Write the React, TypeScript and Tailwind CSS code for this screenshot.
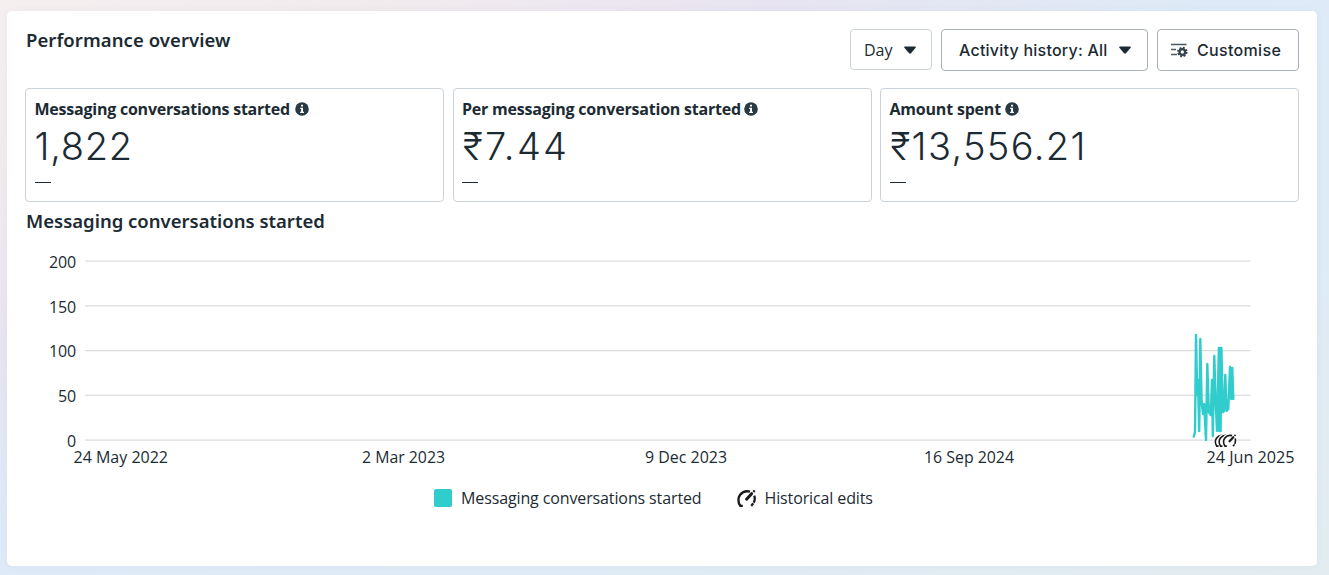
import { useId } from "react";

const metrics = [
  { label: "Messaging conversations started", value: "1,822", labelClass: "w-[257px] tracking-[-0.23px]", valueClass: "tracking-[0.7px]" },
  { label: "Per messaging conversation started", value: "₹7.44", labelClass: "w-[279px] tracking-[-0.21px]", valueClass: "pl-px tracking-[2.3px]" },
  { label: "Amount spent", value: "₹13,556.21", labelClass: "w-[112px] tracking-[-0.2px]", valueClass: "pl-px tracking-[1.35px]" },
];

const yTicks = [
  { label: "200", y: 261 },
  { label: "150", y: 305.75 },
  { label: "100", y: 350.5 },
  { label: "50", y: 395.25 },
  { label: "0", y: 440 },
];

const xTicks = [
  { label: "24 May 2022", x: 73.5, width: 94.5 },
  { label: "2 Mar 2023", x: 362, width: 83 },
  { label: "9 Dec 2023", x: 645, width: 82 },
  { label: "16 Sep 2024", x: 924, width: 90 },
  { label: "24 Jun 2025", x: 1206.5, width: 88 },
];

const editMarks = [1214.4, 1218.2, 1222.6];

const series =
  "1193.8,436.5 1195,432 1196,335 1197.2,395 1198,380 1199.2,431 1200.3,339 1201.6,402 1203,414 1204.2,404 1206,440 1207.3,364 1208.8,412 1210.8,415 1212,380 1212.8,436 1214.3,356 1215.6,400 1217,431 1218.9,348 1219.3,431 1220,348 1220.6,431 1221.4,348 1222.8,412 1224,411 1225.3,375 1226.6,411 1228.3,409 1230,367 1231.2,399 1232.3,368 1233.3,399";

const InfoIcon = () => (
  <svg className="size-[14px] shrink-0" viewBox="0 0 14 14">
    <circle cx="7" cy="7" r="6.8" fill="#283943" />
    <path d="M6 2.8h2v1.8H6zM5.2 5.7H8v4h1v1.2H5.1V9.7h1V6.9h-.9z" fill="#fff" />
  </svg>
);

const Caret = () => (
  <svg className="h-[8px] w-[12px] shrink-0" viewBox="0 0 12 8">
    <path d="M1 .4h10c.8 0 1.1.8.6 1.4L7 7.2c-.6.6-1.4.6-2 0L.4 1.8C-.1 1.2.2.4 1 .4z" fill="#1c2b33" />
  </svg>
);

const CustomiseIcon = () => (
  <svg className="h-[16px] w-[18px] shrink-0" viewBox="0 0 18 16" fill="none">
    <path d="M1 2.5h15.5M1 7.5h5M1 12.5h6" stroke="#4b5a63" strokeWidth="1.3" />
    <circle cx="12.3" cy="10" r="4.4" stroke="#34434c" strokeWidth="1.7" strokeDasharray="1.9 1.556" />
    <circle cx="12.3" cy="10" r="2.8" stroke="#34434c" strokeWidth="2.3" />
  </svg>
);

/* Gauge glyph used for historical edits */
const Gauge = () => (
  <g fill="none" stroke="#1b1b1b">
    <path d="M2.4 16.9h3.4M3.2 16.6C.9 13.6.9 8.8 3.1 5.8 5.8 2.4 9.8 1.7 13 2.6" strokeWidth="2.4" />
    <path d="M9.6 10.2 14.6 4.7" strokeWidth="3.1" strokeLinecap="round" />
    <path d="M16.3 2.9 17.7 1.5M17.3 6.6C18.4 10.2 17.6 13.9 14.2 16.9" strokeWidth="2.3" strokeDasharray="7.4 .8" />
  </g>
);

const Chart = () => {
  const clip = useId();
  return (
    <svg className="-ml-[25px] block h-[235px] w-[1299px]" viewBox="0 237 1299 235">
      <defs>
        <clipPath id={clip}>
          <rect x="85" y="250" width="1166" height="191" />
        </clipPath>
      </defs>
      {yTicks.map((t) => (
        <g key={t.label}>
          <path d={`M85 ${t.y + 0.2}H1250.5`} stroke="#dadcde" strokeWidth="1.3" />
          <text x="76" y={t.y + 6.8} textAnchor="end" letterSpacing="-0.15" fontSize="16" fill="#1c2b33">
            {t.label}
          </text>
        </g>
      ))}
      <polyline
        points={series}
        clipPath={`url(#${clip})`}
        fill="none"
        stroke="#31cdcd"
        strokeWidth="2.4"
        strokeLinejoin="round"
        strokeLinecap="round"
      />
      {editMarks.map((x) => (
        <g key={x} transform={`translate(${x} 433.8) scale(.73)`}>
          <circle cx="9.5" cy="9.5" r="10" fill="#fff" />
          <Gauge />
        </g>
      ))}
      {xTicks.map((t) => (
        <text key={t.label} x={t.x} y="463" textLength={t.width} lengthAdjust="spacingAndGlyphs" fontSize="16" fill="#1c2b33">
          {t.label}
        </text>
      ))}
    </svg>
  );
};

const App = () => {
  return (
    <main className="h-[575px] w-[1329px] overflow-hidden bg-[linear-gradient(to_bottom_right,#f5eff0_0%,#f1ebee_15%,#e8e4f1_29%,#deeaf7_46%,#dfebf5_75%,#e3ecf0_100%)] pt-[11px] pl-[7px] font-['Open_Sans','Noto_Sans',sans-serif] whitespace-nowrap text-[#1c2b33]">
      <section className="h-[555px] w-[1310px] rounded-[5px] bg-white pl-[18px] shadow-[0_0_6px_rgba(100,110,150,0.06)]">
        <header className="flex h-[77px] w-[1274px] items-start justify-between pt-[18px]">
          <h2 className="ml-px font-['Noto_Sans'] text-[18.5px] leading-[22px] font-semibold tracking-[0.07px]">
            Performance overview
          </h2>
          <div className="flex items-start gap-[9px]">
            <button className="flex h-[41px] w-[82px] items-center rounded-[4px] border border-[#ccd2dc] pl-[13px]">
              <span className="mr-[12px] w-[28px] text-[16px]">Day</span>
              <Caret />
            </button>
            <button className="flex h-[42px] w-[207px] items-center rounded-[4px] border border-[#a7b0ba] pl-[17px]">
              <span className="mr-[11px] w-[149px] text-left font-['Inter'] text-[16px] font-medium tracking-[0.23px]">
                Activity history: All
              </span>
              <Caret />
            </button>
            <button className="flex h-[42px] w-[142px] items-center rounded-[4px] border border-[#a7b0ba] pl-[12px]">
              <CustomiseIcon />
              <span className="ml-[9px] font-['Inter'] text-[16px] font-medium tracking-[0.33px]">Customise</span>
            </button>
          </div>
        </header>

        <div className="grid w-[1274px] grid-cols-3 gap-[8.5px]">
          {metrics.map((m) => (
            <div key={m.label} className="h-[114px] rounded-[4px] border border-[#cbd2da] pt-[8px] pl-[8.5px]">
              <div className="flex h-6 items-center gap-[3px]">
                <span className={`text-[16px] leading-6 font-bold ${m.labelClass}`}>{m.label}</span>
                <InfoIcon />
              </div>
              <div className={`h-[51px] font-['Inter'] text-[38px] leading-[50px] font-light ${m.valueClass}`}>{m.value}</div>
              <div className="mt-[10px] h-px w-[16px] bg-[#1c2b33]" />
            </div>
          ))}
        </div>

        <h3 className="mt-[7px] ml-px h-[28px] font-['Noto_Sans'] text-[18.5px] leading-6 font-semibold">
          Messaging conversations started
        </h3>

        <Chart />

        <div className="ml-[409px] flex h-[52px] items-center text-[16px] tracking-[-0.12px]">
          <span className="mr-[9px] size-[18px] rounded-[2px] bg-[#31cdcd]" />
          <span className="w-[240px]">Messaging conversations started</span>
          <svg className="mr-[9px] ml-[35.5px] size-[19px]" viewBox="0 0 19 19">
            <Gauge />
          </svg>
          <span>Historical edits</span>
        </div>
      </section>
    </main>
  );
};

export default App;
